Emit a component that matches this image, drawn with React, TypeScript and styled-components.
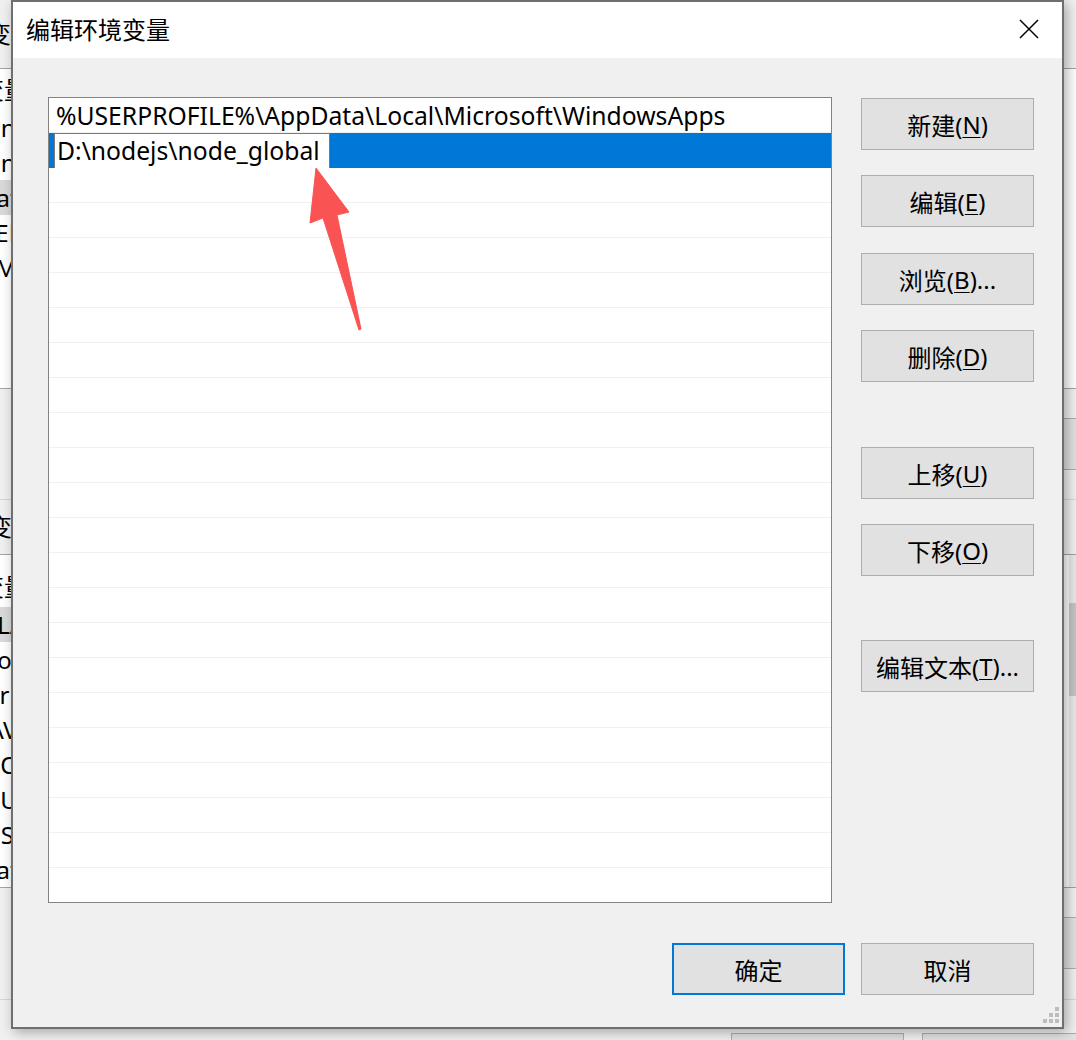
import React from "react";
import styled, { createGlobalStyle } from "styled-components";

const UI_FONT = `"Noto Sans", "Noto Sans CJK SC", sans-serif`;

const GlobalStyle = createGlobalStyle`
  html, body { margin: 0; padding: 0; background: #f0f0f0; }
  body { font-family: ${UI_FONT}; }
  *, *::before, *::after { box-sizing: border-box; }
`;

const Desktop = styled.div`
  position: relative;
  width: 1076px;
  height: 1040px;
  overflow: hidden;
  background: #f0f0f0;
  font-family: ${UI_FONT};
`;

/* ---------- window behind (only its edges show) ---------- */

const BackWindow = styled.div`
  width: 100%;
  height: 100%;
  display: flex;
  flex-direction: column;
  background: #f0f0f0;
  font-size: 24px;
  color: #000;
`;

const BackCaption = styled.div<{ $height: number }>`
  height: ${(p) => p.$height}px;
  flex: none;
  display: flex;
  align-items: center;
  border-bottom: 1px solid #a3a3a3;
`;

const ClipColumn = styled.div`
  width: 20px;
  flex: none;
  display: flex;
  flex-direction: column;
  overflow: hidden;
`;

const BackLabel = styled.span<{ $shift: number }>`
  margin-left: ${(p) => p.$shift}px;
  white-space: nowrap;
  line-height: 1;
`;

const BackList = styled.div<{ $height: number }>`
  height: ${(p) => p.$height}px;
  flex: none;
  display: flex;
  background: #fff;
  border-bottom: 1px solid #a3a3a3;
`;

const BackSpacer = styled.div`
  flex: 1;
`;

const BackHeader = styled.div<{ $height: number }>`
  height: ${(p) => p.$height}px;
  flex: none;
  display: flex;
  align-items: flex-end;
  padding-bottom: 8px;
`;

const BackRow = styled.div<{ $selected?: boolean }>`
  height: 35px;
  flex: none;
  display: flex;
  align-items: center;
  white-space: nowrap;
  background: ${(p) => (p.$selected ? "#d9d9d9" : "transparent")};
`;

const BackScrollTrack = styled.div`
  width: 7px;
  flex: none;
  display: flex;
  flex-direction: column;
  background: #e8e8e8;
`;

const BackScrollThumb = styled.div`
  margin-top: 48px;
  height: 93px;
  background: #c4c4c4;
`;

const BackGap = styled.div<{ $height: number }>`
  height: ${(p) => p.$height}px;
  flex: none;
  display: flex;
  flex-direction: column;
  border-bottom: 1px solid #d6d6d6;
`;

const BackButtonEdge = styled.div`
  align-self: flex-end;
  margin-top: 29px;
  margin-right: -20px;
  width: 40px;
  height: 52px;
  background: #e1e1e1;
  border: 1px solid #adadad;
`;

const BackFooter = styled.div`
  flex: 1;
  display: flex;
  justify-content: flex-end;
  gap: 18px;
  padding-top: 33px;
  margin-right: -19px;
`;

const BackFooterButton = styled.div`
  width: 173px;
  height: 52px;
  flex: none;
  background: #e1e1e1;
  border: 1px solid #adadad;
`;

/* ---------- front dialog ---------- */

const Dialog = styled.div`
  position: absolute;
  left: 11px;
  top: 0;
  width: 1053px;
  height: 1029px;
  display: flex;
  flex-direction: column;
  background: #f0f0f0;
  border: 2px solid #6f6f6f;
  box-shadow: 3px 3px 12px rgba(0, 0, 0, 0.32);
`;

const TitleBar = styled.div`
  height: 56px;
  flex: none;
  display: flex;
  align-items: flex-start;
  justify-content: space-between;
  padding: 0 23px 0 13px;
  background: #fff;
`;

const TitleText = styled.div`
  margin-top: 13px;
  font-size: 24px;
  line-height: 28px;
  color: #000;
  font-family: "Noto Sans CJK SC", "Noto Sans", sans-serif;
`;

const CloseButton = styled.div`
  margin-top: 17px;
  width: 20px;
  height: 20px;
  display: flex;
`;

const Body = styled.div`
  flex: 1;
  display: flex;
  flex-direction: column;
  padding: 39px 28px 32px 35px;
`;

const MainArea = styled.div`
  flex: 1;
  display: flex;
  gap: 29px;
`;

const ListBox = styled.div`
  width: 784px;
  height: 806px;
  flex: none;
  display: flex;
  flex-direction: column;
  overflow: hidden;
  background: #fff;
  border: 1px solid #828282;
`;

const ListRow = styled.div<{ $selected?: boolean }>`
  height: 35px;
  flex: none;
  display: flex;
  align-items: center;
  padding-left: ${(p) => (p.$selected ? 5 : 7)}px;
  font-size: 24.7px;
  color: #000;
  white-space: nowrap;
  background: ${(p) => (p.$selected ? "#0078d7" : "#fff")};
  border-bottom: 1px solid ${(p) => (p.$selected ? "#0078d7" : "#f0f0f0")};
`;

const EditBox = styled.div`
  width: 276px;
  height: 36px;
  margin-top: 1px;
  display: flex;
  align-items: center;
  padding-left: 2px;
  background: #fff;
  border: 1px solid #7a7a7a;
`;

const ButtonColumn = styled.div`
  width: 173px;
  flex: none;
  display: flex;
  flex-direction: column;
  padding-top: 1px;
`;

const PushButton = styled.div<{ $gap?: number; $default?: boolean }>`
  width: 173px;
  height: 52px;
  flex: none;
  margin-top: ${(p) => p.$gap ?? 0}px;
  display: flex;
  align-items: center;
  justify-content: center;
  font-size: 24px;
  color: #000;
  background: #e1e1e1;
  border: ${(p) => (p.$default ? "2px solid #0078d7" : "1px solid #adadad")};
  white-space: nowrap;
`;

const Mnemonic = styled.span`
  text-decoration: underline;
  text-decoration-thickness: 1px;
  text-underline-offset: 3px;
`;

const Footer = styled.div`
  display: flex;
  justify-content: flex-end;
  gap: 16px;
  margin-top: 40px;
`;

const ResizeGrip = styled.svg`
  position: absolute;
  right: 3px;
  bottom: 4px;
`;

const Annotation = styled.svg`
  position: absolute;
  left: 300px;
  top: 160px;
`;

const userVars = ["OneDrive", "OneDriveConsumer", "Path", "TEMP", "TMP"];
const systemVars = [
  "CLASSPATH",
  "ComSpec",
  "DriverData",
  "JAVA_HOME",
  "NODE_PATH",
  "NUMBER_OF_PROCESSORS",
  "OS",
  "Path",
];

const rightButtons: { label: string; key: string; tail?: string; gap: number }[] = [
  { label: "新建", key: "N", gap: 0 },
  { label: "编辑", key: "E", gap: 25 },
  { label: "浏览", key: "B", tail: "...", gap: 26 },
  { label: "删除", key: "D", gap: 25 },
  { label: "上移", key: "U", gap: 65 },
  { label: "下移", key: "O", gap: 25 },
  { label: "编辑文本", key: "T", tail: "...", gap: 64 },
];

const entries = [
  "%USERPROFILE%\\AppData\\Local\\Microsoft\\WindowsApps",
  "D:\\nodejs\\node_global",
];

export default function App() {
  const emptyRows = Array.from({ length: 21 });
  return (
    <>
      <GlobalStyle />
      <Desktop>
        <BackWindow>
          <BackCaption $height={69}>
            <ClipColumn>
              <BackLabel $shift={-13}>变量(U)</BackLabel>
            </ClipColumn>
          </BackCaption>
          <BackList $height={320}>
            <ClipColumn>
              <BackHeader $height={41}>
                <BackLabel $shift={-20}>变量</BackLabel>
              </BackHeader>
              {userVars.map((v) => (
                <BackRow key={v} $selected={v === "Path"}>
                  <BackLabel $shift={-18}>{v}</BackLabel>
                </BackRow>
              ))}
            </ClipColumn>
            <BackSpacer />
          </BackList>
          <BackGap $height={111}>
            <BackButtonEdge />
          </BackGap>
          <BackCaption $height={55}>
            <ClipColumn>
              <BackLabel $shift={-12}>变量(S)</BackLabel>
            </ClipColumn>
          </BackCaption>
          <BackList $height={333}>
            <ClipColumn>
              <BackHeader $height={52}>
                <BackLabel $shift={-20}>变量</BackLabel>
              </BackHeader>
              {systemVars.map((v, i) => (
                <BackRow key={v + i} $selected={i === 0}>
                  <BackLabel $shift={-18}>{v}</BackLabel>
                </BackRow>
              ))}
            </ClipColumn>
            <BackSpacer />
            <BackScrollTrack>
              <BackScrollThumb />
            </BackScrollTrack>
          </BackList>
          <BackGap $height={112}>
            <BackButtonEdge />
          </BackGap>
          <BackFooter>
            <BackFooterButton />
            <BackFooterButton />
          </BackFooter>
        </BackWindow>

        <Dialog>
          <TitleBar>
            <TitleText>编辑环境变量</TitleText>
            <CloseButton>
              <svg width="20" height="20" viewBox="0 0 20 20">
                <path d="M1 1 L19 19 M19 1 L1 19" stroke="#000" strokeWidth="1.5" fill="none" />
              </svg>
            </CloseButton>
          </TitleBar>
          <Body>
            <MainArea>
              <ListBox>
                <ListRow>{entries[0]}</ListRow>
                <ListRow $selected>
                  <EditBox>{entries[1]}</EditBox>
                </ListRow>
                {emptyRows.map((_, i) => (
                  <ListRow key={i} />
                ))}
              </ListBox>
              <ButtonColumn>
                {rightButtons.map((b) => (
                  <PushButton key={b.key} $gap={b.gap}>
                    {b.label}(<Mnemonic>{b.key}</Mnemonic>){b.tail ?? ""}
                  </PushButton>
                ))}
              </ButtonColumn>
            </MainArea>
            <Footer>
              <PushButton $default>确定</PushButton>
              <PushButton>取消</PushButton>
            </Footer>
          </Body>
          <ResizeGrip width="16" height="16" viewBox="0 0 16 16">
            <rect x="12" y="0" width="4" height="4" fill="#bdbdbd" />
            <rect x="6" y="6" width="4" height="4" fill="#bdbdbd" />
            <rect x="12" y="6" width="4" height="4" fill="#bdbdbd" />
            <rect x="0" y="12" width="4" height="4" fill="#bdbdbd" />
            <rect x="6" y="12" width="4" height="4" fill="#bdbdbd" />
            <rect x="12" y="12" width="4" height="4" fill="#bdbdbd" />
          </ResizeGrip>
        </Dialog>

        <Annotation width="70" height="180" viewBox="0 0 70 180">
          <polygon
            points="16,8 49,52 37,55 61,169 59,170 23,58 10,63"
            fill="#f95353"
            stroke="#f95353"
            strokeWidth="1"
            strokeLinejoin="round"
          />
        </Annotation>
      </Desktop>
    </>
  );
}
